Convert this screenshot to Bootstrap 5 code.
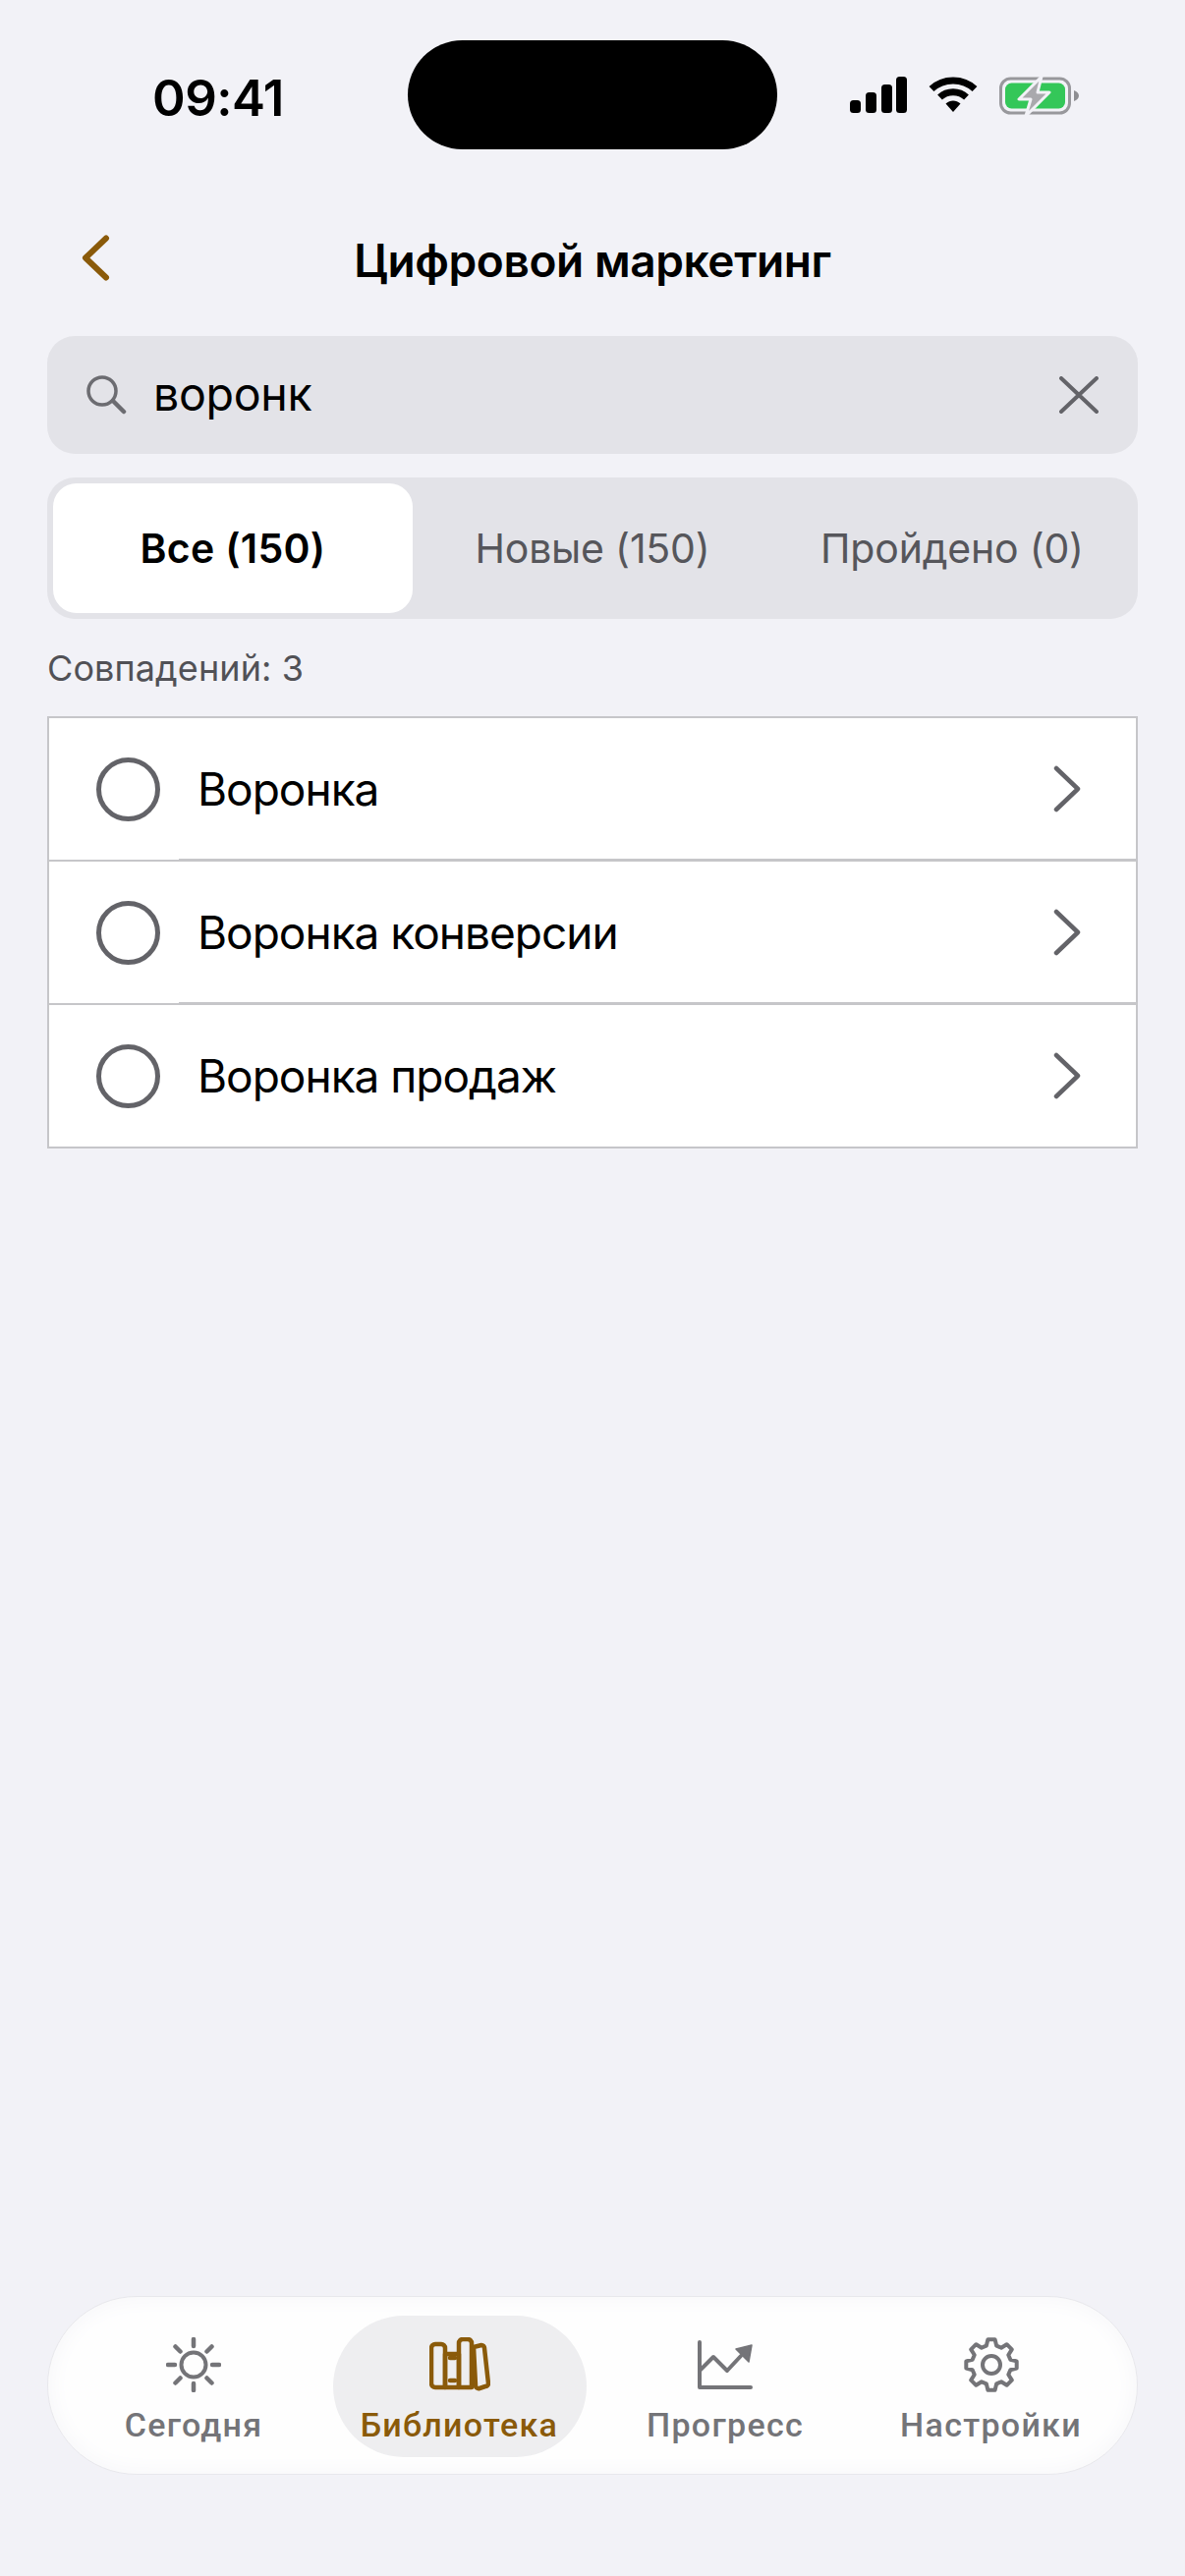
<!DOCTYPE html>
<html lang="ru">
<head>
  <meta charset="UTF-8" />
  <title>Цифровой маркетинг</title>
  <meta name="viewport" content="width=device-width, initial-scale=1.0" />
  <link href="https://cdn.jsdelivr.net/npm/bootstrap@5.3.0/dist/css/bootstrap.min.css" rel="stylesheet" />
  <style>
    body {
      background-color: #f2f2f7;
      font-family: Inter, "Liberation Sans", sans-serif;
      color: #000;
    }

    .phone-page {
      height: 2622px;
      padding-bottom: 103px;
    }

    /* status bar */
    .status-strip {
      height: 152px;
      padding-top: 41px;
    }
    .status-time {
      width: 415px;
      padding-left: 155px;
      padding-top: 34px;
      font-size: 51px;
      line-height: 50px;
      font-weight: 600;
      letter-spacing: -0.5px;
    }
    .status-island {
      width: 376px;
      height: 111px;
      background: #000;
      border-radius: 56px;
    }
    .status-icons {
      padding-left: 74px;
      padding-top: 37px;
      gap: 22px;
    }

    /* header */
    .page-head {
      height: 53px;
      margin-top: 87px;
      padding-left: 82px;
    }
    .page-title {
      margin: 0;
      font-size: 46px;
      line-height: 53px;
      font-weight: 600;
      letter-spacing: -0.4px;
      left: 0;
      right: 0;
      top: 0;
    }

    /* search */
    .search-box {
      height: 120px;
      margin: 50px 48px 0;
      padding: 0 40px 0 39px;
      background: #e3e3e8;
      border-radius: 28px;
    }
    .search-text {
      margin-left: 27px;
      font-size: 46.5px;
      letter-spacing: -0.3px;
    }

    /* segmented tabs */
    .seg-tabs {
      height: 144px;
      margin: 24px 48px 0;
      padding: 6px;
      background: #e3e3e8;
      border-radius: 28px;
    }
    .seg-tabs .nav-link {
      color: #56565b;
      font-size: 41px;
      line-height: 50px;
      padding: 0;
      border-radius: 24px;
      letter-spacing: -0.2px;
    }
    .seg-tabs .nav-link.active {
      background: #fff;
      color: #000;
      font-weight: 600;
      letter-spacing: 0.3px;
    }

    .match-count {
      margin: 28px 48px 0;
      font-size: 36px;
      line-height: 44px;
      color: #515156;
      letter-spacing: 0.1px;
    }

    /* results */
    .result-list {
      margin: 27px 48px 0;
      border-top: 2px solid #c6c6c9;
      border-radius: 0;
    }
    .result-list .list-group-item {
      height: 146px;
      padding: 0 56px 0 48px;
      background: #fff;
      border: 2px solid #c6c6c9;
      border-top: 0;
      border-radius: 0;
      font-size: 46px;
      letter-spacing: -1px;
      color: #000;
    }
    .result-list .list-group-item:not(:last-child)::after {
      content: "";
      position: absolute;
      left: 132px;
      right: 0;
      bottom: 0;
      height: 1px;
      background: #c6c6c9;
    }
    .result-radio {
      width: 65px;
      height: 65px;
      margin-right: 38px;
      border: 5px solid #636368;
      border-radius: 50%;
    }

    /* bottom tab bar */
    .tab-strip {
      height: 182px;
      margin: 0 48px;
      padding: 19px 19px;
      gap: 12.5px;
      background: #fefefe;
      border: 1px solid #e8e8ec;
      border-radius: 91px;
      box-shadow: inset 0 0 24px #f6f6f9;
    }
    .tab-entry {
      width: 258px;
      height: 144px;
      padding-top: 22px;
      border-radius: 72px;
      color: #747478;
      font-family: Roboto, "Liberation Sans", sans-serif;
      font-size: 34px;
      line-height: 40px;
      font-weight: 500;
      letter-spacing: 1.3px;
      text-decoration: none;
    }
    .tab-entry svg {
      margin-bottom: 13px;
    }
    .tab-entry.is-current {
      background: #eeeef0;
      color: #8a5a0a;
    }
  </style>
</head>
<body>
<div class="phone-page d-flex flex-column">

  <div class="status-strip d-flex">
    <div class="status-time">09:41</div>
    <div class="status-island"></div>
    <div class="status-icons d-flex align-items-start">
      <svg width="58" height="38" viewBox="0 0 58 38" fill="#000">
        <rect x="0" y="24" width="11" height="13" rx="3.5"/>
        <rect x="16" y="16" width="11" height="21" rx="3.5"/>
        <rect x="32" y="8" width="11" height="29" rx="3.5"/>
        <rect x="47" y="0" width="11" height="37" rx="3.5"/>
      </svg>
      <svg width="50" height="38" viewBox="0 0 50 38">
        <path d="M3 12.5C15 1 35 1 47 12.5" fill="none" stroke="#000" stroke-width="7"/>
        <path d="M11.5 21C19 14 31 14 38.500 21" fill="none" stroke="#000" stroke-width="7"/>
        <path d="M17.500 27.500C22 23.500 28 23.500 32.500 27.500L25 36z" fill="#000"/>
      </svg>
      <svg class="battery-icon" width="82" height="40" viewBox="0 0 82 40">
        <rect x="1.500" y="2" width="70" height="35" rx="10" fill="none" stroke="#98989c" stroke-width="3"/>
        <rect x="6" y="6.500" width="61" height="26" rx="6.500" fill="#34c759"/>
        <path d="M76 14c3 1 5 3 5 5.500s-2 4.500-5 5.500z" fill="#8e8e92"/>
        <path d="M43 0L20 23h12l-5 17 24-24H39z" fill="#a9a9ad" stroke="#f2f2f7" stroke-width="3" stroke-linejoin="round"/>
      </svg>
    </div>
  </div>

  <div class="page-head position-relative">
    <h1 class="page-title position-absolute text-center">Цифровой маркетинг</h1>
    <svg class="position-relative d-block" width="30" height="47" viewBox="0 0 30 47">
      <path d="M26 3.500L5 23.500l21 20" fill="none" stroke="#8a5a0a" stroke-width="6" stroke-linecap="round" stroke-linejoin="round"/>
    </svg>
  </div>

  <div class="search-box d-flex align-items-center">
    <svg width="42" height="40" viewBox="0 0 42 40">
      <circle cx="17" cy="16" r="14" fill="none" stroke="#6c6c71" stroke-width="3.500"/>
      <path d="M28 26l11 11" stroke="#6c6c71" stroke-width="4.500" stroke-linecap="round"/>
    </svg>
    <span class="search-text flex-grow-1">воронк</span>
    <svg width="40" height="38" viewBox="0 0 40 38">
      <path d="M2 2l36 34M38 2L2 36" stroke="#636368" stroke-width="4" stroke-linecap="round"/>
    </svg>
  </div>

  <ul class="nav nav-pills nav-justified seg-tabs flex-nowrap">
    <li class="nav-item d-flex"><a class="nav-link active w-100 d-flex align-items-center justify-content-center" href="#">Все (150)</a></li>
    <li class="nav-item d-flex"><a class="nav-link w-100 d-flex align-items-center justify-content-center" href="#">Новые (150)</a></li>
    <li class="nav-item d-flex"><a class="nav-link w-100 d-flex align-items-center justify-content-center" href="#">Пройдено (0)</a></li>
  </ul>

  <div class="match-count">Совпадений: 3</div>

  <ul class="list-group result-list">
    <li class="list-group-item d-flex align-items-center">
      <span class="result-radio flex-shrink-0"></span>
      <span class="flex-grow-1">Воронка</span>
      <svg width="28" height="48" viewBox="0 0 28 48"><path d="M3 3l22 21L3 45" fill="none" stroke="#636368" stroke-width="4.500" stroke-linecap="round" stroke-linejoin="round"/></svg>
    </li>
    <li class="list-group-item d-flex align-items-center">
      <span class="result-radio flex-shrink-0"></span>
      <span class="flex-grow-1">Воронка конверсии</span>
      <svg width="28" height="48" viewBox="0 0 28 48"><path d="M3 3l22 21L3 45" fill="none" stroke="#636368" stroke-width="4.500" stroke-linecap="round" stroke-linejoin="round"/></svg>
    </li>
    <li class="list-group-item d-flex align-items-center">
      <span class="result-radio flex-shrink-0"></span>
      <span class="flex-grow-1">Воронка продаж</span>
      <svg width="28" height="48" viewBox="0 0 28 48"><path d="M3 3l22 21L3 45" fill="none" stroke="#636368" stroke-width="4.500" stroke-linecap="round" stroke-linejoin="round"/></svg>
    </li>
  </ul>

  <nav class="tab-strip d-flex mt-auto">
    <a class="tab-entry d-flex flex-column align-items-center" href="#">
      <svg width="56" height="56" viewBox="0 0 56 56" fill="none" stroke="#747478" stroke-linecap="round">
        <circle cx="28" cy="28" r="12.500" stroke-width="4"/>
        <path stroke-width="4.500" d="M28 2v7M28 47v7M2 28h7M47 28h7M9.500 9.500l5 5M41.500 41.500l5 5M9.500 46.500l5-5M41.500 14.500l5-5"/>
      </svg>
      Сегодня
    </a>
    <a class="tab-entry is-current d-flex flex-column align-items-center" href="#">
      <svg width="62" height="56" viewBox="0 0 62 56" fill="none" stroke="#8a5a0a" stroke-width="4.500" stroke-linejoin="round" stroke-linecap="round">
        <path d="M2 11a4 4 0 0 1 4-4h6a4 4 0 0 1 4 4v40H6a4 4 0 0 1-4-4z"/>
        <path d="M16 17h14v34H16z"/>
        <path d="M30 6a4 4 0 0 1 4-4h5a4 4 0 0 1 4 4v45H30z"/>
        <path d="M45 10l8-2a3 3 0 0 1 3 3l4 36a3 3 0 0 1-3 3l-6 2a3 3 0 0 1-4-3z"/>
        <path d="M21 21h5M21 44h5"/>
      </svg>
      Библиотека
    </a>
    <a class="tab-entry d-flex flex-column align-items-center" href="#">
      <svg width="56" height="56" viewBox="0 0 56 56" fill="none" stroke="#747478" stroke-width="4" stroke-linecap="round" stroke-linejoin="round">
        <path d="M2 5v46h52"/>
        <path d="M3 33l13-13 14 14 14-15"/>
        <path d="M39 12l16-4-3 17z" fill="#747478" stroke-width="1.500"/>
      </svg>
      Прогресс
    </a>
    <a class="tab-entry d-flex flex-column align-items-center" href="#">
      <svg width="56" height="56" viewBox="0 0 56 56" fill="none" stroke="#747478" stroke-width="4" stroke-linejoin="round">
        <path id="gearOutline"/>
        <circle cx="28" cy="28" r="9"/>
      </svg>
      Настройки
    </a>
  </nav>
</div>

<script src="https://cdn.jsdelivr.net/npm/bootstrap@5.3.0/dist/js/bootstrap.bundle.min.js"></script>
<script>
  // gear has 8 teeth, easier to compute than to write out 32 points
  const gearPoints = [];
  for (let k = 0; k < 8; k++) {
    const a = k * 45 - 90;
    [[-15, 20], [-8, 26], [8, 26], [15, 20]].forEach(([da, r]) => {
      const rad = (a + da) * Math.PI / 180;
      gearPoints.push((28 + r * Math.cos(rad)).toFixed(1) + " " + (28 + r * Math.sin(rad)).toFixed(1));
    });
  }
  document.getElementById("gearOutline").setAttribute("d", "M" + gearPoints.join("L") + "z");
</script>
</body>
</html>
